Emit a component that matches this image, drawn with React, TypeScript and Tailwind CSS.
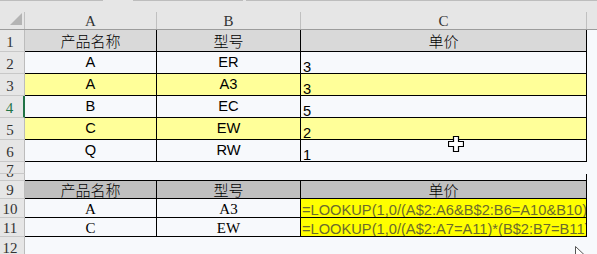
import type { ReactNode } from "react";

const sans = "font-['Liberation_Sans','Noto_Sans_CJK_SC',sans-serif]";
const cjk = "font-['Noto_Sans_CJK_SC',sans-serif] font-light";
const song = "font-['Liberation_Serif','Noto_Sans_CJK_SC',serif]";

const LIGHT = "bg-[#f7f9fc]";
const YELLOW = "bg-[#ffff99]";

interface RowHeadProps {
  n: string;
  active?: boolean;
  place?: string;
}

function RowHead({ n, active = false, place = "items-center pt-[3px]" }: RowHeadProps) {
  return (
    <div
      className={`w-[25px] shrink-0 flex justify-center pr-[4px] overflow-hidden bg-[#e6e6e6] border-b border-b-[#c8c8c8] ${song} text-[15px] leading-none ${
        active
          ? "border-r-2 border-r-[#217346] text-[#217346]"
          : "border-r border-r-[#bcbcbc] text-[#333]"
      } ${place}`}
    >
      {n}
    </div>
  );
}

interface CellProps {
  w: string;
  bg?: string;
  right?: boolean;
  bottom?: boolean;
  className?: string;
  children?: ReactNode;
}

function Cell({ w, bg = LIGHT, right = true, bottom = true, className = "", children }: CellProps) {
  return (
    <div
      className={`${w} shrink-0 flex overflow-hidden whitespace-nowrap ${bg} ${
        right ? "border-r border-r-black" : ""
      } ${bottom ? "border-b border-b-black" : ""} ${className}`}
    >
      {children}
    </div>
  );
}

function Row({ h, children }: { h: string; children: ReactNode }) {
  return <div className={`flex ${h}`}>{children}</div>;
}

const dataRows = [
  { n: "2", a: "A", b: "ER", c: "3", bg: LIGHT },
  { n: "3", a: "A", b: "A3", c: "3", bg: YELLOW },
  { n: "4", a: "B", b: "EC", c: "5", bg: LIGHT, active: true },
  { n: "5", a: "C", b: "EW", c: "2", bg: YELLOW },
  { n: "6", a: "Q", b: "RW", c: "1", bg: LIGHT },
];

const lookupRows = [
  { n: "10", a: "A", b: "A3", f: "=LOOKUP(1,0/(A$2:A6&B$2:B6=A10&B10),C$2:C6)" },
  { n: "11", a: "C", b: "EW", f: "=LOOKUP(1,0/(A$2:A7=A11)*(B$2:B7=B11),C$2:C7)" },
];

function ColLetter({ w, label, sep = true }: { w: string; label?: string; sep?: boolean }) {
  return (
    <div className={`${w} shrink-0 pt-[11px]`}>
      <div
        className={`h-[17px] flex items-center justify-center pt-[2px] ${song} text-[15px] leading-none text-[#333] ${
          sep ? "border-r border-r-[#c0c0c0]" : ""
        }`}
      >
        {label}
      </div>
    </div>
  );
}

function HeaderCells({ bg }: { bg: string }) {
  const labels = ["产品名称", "型号", "单价"];
  const widths = ["w-[132px]", "w-[144px]", "w-[286px]"];
  return (
    <>
      {labels.map((label, i) => (
        <Cell key={label} w={widths[i]} bg={bg} className={`items-center justify-center ${cjk} text-[15px] leading-none text-black`}>
          {label}
        </Cell>
      ))}
    </>
  );
}

export default function App() {
  return (
    <div className="relative w-[597px] h-[254px] overflow-hidden bg-[#f7f9fc] select-none">
      {/* column header */}
      <div className="bg-[#e6e6e6] border-b border-b-[#9c9c9c]">
        <div className="flex h-[1px]">
          <div className="w-[103px] bg-[#bdbdbd]" />
          <div className="w-[30px]" />
          <div className="w-[110px] bg-[#bdbdbd]" />
          <div className="w-[3px]" />
          <div className="flex-1 bg-[#bdbdbd]" />
        </div>
        <div className="flex h-[28px]">
          <div className="w-[25px] shrink-0 pt-[11px]">
            <div className="h-[17px] border-r border-r-[#c0c0c0] pl-[10px] pt-[1px]">
              <svg width="12" height="12" viewBox="0 0 12 12">
                <polygon points="12,0 12,12 0,12" fill="#b4b4b4" />
              </svg>
            </div>
          </div>
          <ColLetter w="w-[132px]" label="A" />
          <ColLetter w="w-[144px]" label="B" />
          <ColLetter w="w-[286px]" label="C" />
          <ColLetter w="flex-1" sep={false} />
        </div>
      </div>

      {/* first table */}
      <Row h="h-[22px]">
        <RowHead n="1" />
        <HeaderCells bg="bg-[#d9d9d9]" />
        <div className="flex-1" />
      </Row>
      {dataRows.map((r) => (
        <Row key={r.n} h="h-[22px]">
          <RowHead n={r.n} active={r.active} />
          <Cell w="w-[132px]" bg={r.bg} className={`items-center justify-center ${sans} text-[14.67px] leading-none text-black`}>
            {r.a}
          </Cell>
          <Cell w="w-[144px]" bg={r.bg} className={`items-center justify-center ${sans} text-[14.67px] leading-none text-black`}>
            {r.b}
          </Cell>
          <Cell w="w-[286px]" bg={r.bg} className={`items-end pl-[2px] ${sans} text-[14.67px] leading-[12px] text-black`}>
            {r.c}
          </Cell>
          <div className="flex-1" />
        </Row>
      ))}

      {/* rows 7-8, squeezed */}
      <Row h="h-[12px]">
        <RowHead n="7" place="items-start pt-[1px]" />
        <div className="flex-1" />
      </Row>
      <Row h="h-[7px]">
        <RowHead n="8" place="items-end" />
        <Cell w="w-[132px]" right={false} />
        <Cell w="w-[144px]" right={false} />
        <Cell w="w-[286px]" />
        <div className="flex-1" />
      </Row>

      {/* second table */}
      <Row h="h-[18px]">
        <RowHead n="9" place="items-center pt-[2px]" />
        <HeaderCells bg="bg-[#c0c0c0]" />
        <div className="flex-1" />
      </Row>
      {lookupRows.map((r) => (
        <Row key={r.n} h="h-[19px]">
          <RowHead n={r.n} place="items-center pt-[2px]" />
          <Cell w="w-[132px]" className={`items-center justify-center pt-[2px] ${song} text-[15px] leading-none text-black`}>
            {r.a}
          </Cell>
          <Cell w="w-[144px]" className={`items-center justify-center pt-[2px] ${song} text-[15px] leading-none text-black`}>
            {r.b}
          </Cell>
          <Cell w="w-[286px]" bg="bg-[#ffff00]" className={`items-end pl-[1px] pb-[1px] ${sans} text-[14.67px] leading-[12px] text-[#6b6b2b]`}>
            {r.f}
          </Cell>
          <div className="flex-1" />
        </Row>
      ))}
      <Row h="h-[22px]">
        <RowHead n="12" place="items-center pt-[2px]" />
        <div className="flex-1" />
      </Row>

      {/* cell cursor */}
      <svg className="absolute left-[448px] top-[136px]" width="16" height="16" viewBox="0 0 16 16">
        <path
          d="M5.5 0.5H10.5V5.5H15.5V10.5H10.5V15.5H5.5V10.5H0.5V5.5H5.5Z"
          fill="#fff"
          stroke="#000"
          strokeWidth="1.2"
        />
      </svg>
      {/* mouse pointer */}
      <svg className="absolute left-[575px] top-[246px]" width="12" height="18" viewBox="0 0 12 18">
        <path d="M0.5 0.5V13.5L3.5 10.5L6 16L8 15L5.5 9.5H10Z" fill="#fff" stroke="#555" strokeWidth="1" />
      </svg>
    </div>
  );
}
